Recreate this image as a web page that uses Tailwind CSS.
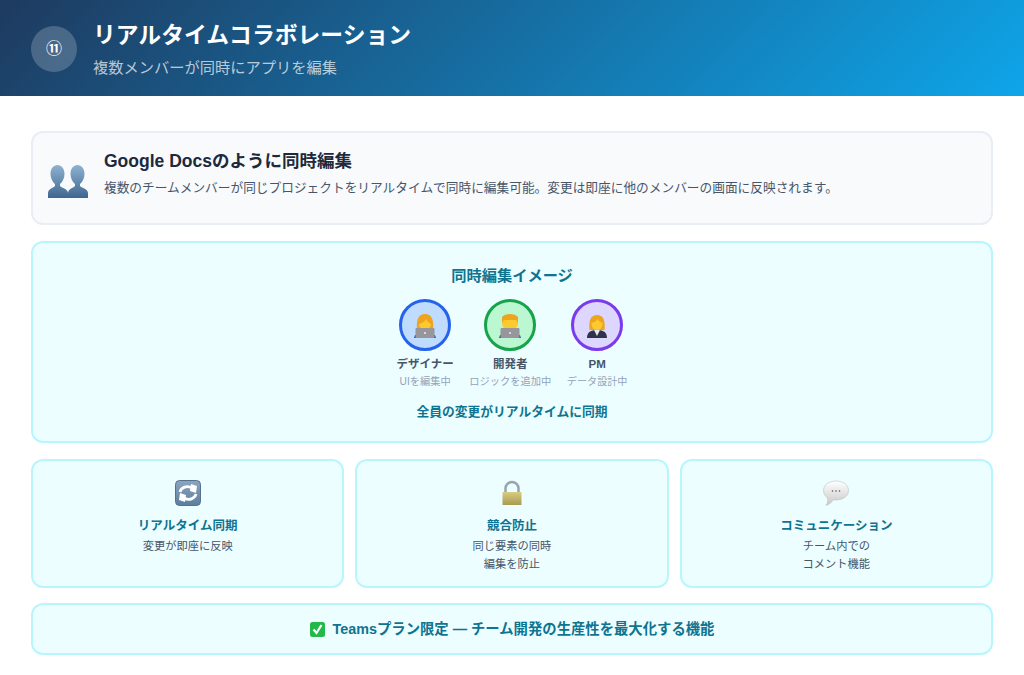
<!DOCTYPE html>
<html lang="ja">
<head>
    <meta charset="UTF-8">
    <title>リアルタイムコラボレーション</title>
    <script src="https://cdn.jsdelivr.net/npm/@tailwindcss/browser@4"></script>
</head>
<body class="bg-white font-['Liberation_Sans','Noto_Sans_CJK_JP',sans-serif] h-[675px] overflow-hidden">
    <!-- Header -->
    <header class="h-24 bg-linear-[135deg] from-[#1e3a5f] to-[#0ea5e9] flex items-center pl-[31px] gap-[16px]">
        <div class="w-[46px] h-[46px] mt-[2px] rounded-full bg-white/20 flex items-center justify-center text-white text-[16px] font-bold">⑪</div>
        <div class="mt-[2px]">
            <h1 class="text-[22.800px] leading-[30px] font-bold text-white">リアルタイムコラボレーション</h1>
            <p class="text-[15.250px] leading-[22px] mt-[7px] text-white/70">複数メンバーが同時にアプリを編集</p>
        </div>
    </header>

    <main class="px-[31px] pt-[35px] flex flex-col gap-4">
        <!-- Intro card -->
        <section class="h-[94px] bg-[#f8fafc] border-2 border-[#e9eef4] rounded-xl flex items-center pl-[15px] gap-[16px]">
            <svg class="w-10 h-[33px] mt-[7px] shrink-0" viewBox="0 0 40 33">
                <defs>
                    <linearGradient id="bust" x1="0" y1="0" x2="0" y2="1">
                        <stop offset="0" stop-color="#8fb2d0"/>
                        <stop offset="1" stop-color="#3f6690"/>
                    </linearGradient>
                </defs>
                <path fill="url(#bust)" d="M0 33V28C0 24 5 23 7 21V19C4.500 17 2.500 13 2.500 9C2.500 3.500 5.500 0 9.500 0S16.500 3.500 16.500 9C16.500 13 14.500 17 12 19V21C14 23 20 24 20 28V33Z"/>
                <path fill="url(#bust)" d="M20 33V28C20 24 25 23 27 21V19C24.500 17 22.500 13 22.500 9C22.500 3.500 25.500 0 29.500 0S36.500 3.500 36.500 9C36.500 13 34.500 17 32 19V21C34 23 40 24 40 28V33Z"/>
            </svg>
            <div class="-mt-[9px]">
                <h2 class="text-[17.500px] leading-6 font-bold text-[#1e293b]">Google Docsのように同時編集</h2>
                <p class="text-[12.700px] leading-5 mt-[5px] text-[#475569]">複数のチームメンバーが同じプロジェクトをリアルタイムで同時に編集可能。変更は即座に他のメンバーの画面に反映されます。</p>
            </div>
        </section>

        <!-- Simultaneous editing image -->
        <section class="h-[202px] bg-[#ecfeff] border-2 border-[#b8f6fd] rounded-xl flex flex-col items-center pt-[22px]">
            <h3 class="text-[15.250px] leading-[22px] font-bold text-[#0e7490]">同時編集イメージ</h3>
            <div class="flex gap-[15.500px] mt-[12px]">
                <div class="flex flex-col items-center">
                    <div class="w-[52px] h-[52px] rounded-full border-[3px] border-[#2563eb] bg-[#bfdbfe] flex items-center justify-center">
                        <svg class="w-[22px] h-[26px]" viewBox="0 0 22 26">
                            <path fill="#eda51e" d="M3 17C2 7 5 2 11 2s9 5 8 15z"/>
                            <ellipse cx="11" cy="12" rx="6" ry="6" fill="#fcc92e"/>
                            <path fill="#eda51e" d="M5 12c4-1 6-3 7-5 1 2 3 4 5 5V5H5z"/>
                            <path fill="#3b4cc0" d="M0 26l1-3h20l1 3z"/>
                            <rect x="1.500" y="16" width="19" height="10" rx="1" fill="#96969b"/>
                            <circle cx="11" cy="21" r="1" fill="#eee"/>
                        </svg>
                    </div>
                    <p class="text-[11.500px] leading-4 font-bold text-[#475569] mt-[5px]">デザイナー</p>
                    <p class="text-[10.250px] leading-4 text-[#94a3b8] mt-[2px]">UIを編集中</p>
                </div>
                <div class="flex flex-col items-center">
                    <div class="w-[52px] h-[52px] rounded-full border-[3px] border-[#16a34a] bg-[#bbf7d0] flex items-center justify-center">
                        <svg class="w-[22px] h-[26px]" viewBox="0 0 22 26">
                            <ellipse cx="11" cy="11" rx="8" ry="8" fill="#fcc92e"/>
                            <path fill="#eda51e" d="M3 11V5c3-4 13-4 16 0v6c-1-1-1-2-2-3H5c-1 1-1 2-2 3z"/>
                            <path fill="#3b4cc0" d="M0 26l1-3h20l1 3z"/>
                            <rect x="1.500" y="16" width="19" height="10" rx="1" fill="#96969b"/>
                            <circle cx="11" cy="21" r="1" fill="#eee"/>
                        </svg>
                    </div>
                    <p class="text-[11.500px] leading-4 font-bold text-[#475569] mt-[5px]">開発者</p>
                    <p class="text-[10.250px] leading-4 text-[#94a3b8] mt-[2px]">ロジックを追加中</p>
                </div>
                <div class="flex flex-col items-center">
                    <div class="w-[52px] h-[52px] rounded-full border-[3px] border-[#7c3aed] bg-[#ddd6fe] flex items-center justify-center">
                        <svg class="w-[22px] h-[26px]" viewBox="0 0 22 26">
                            <path fill="#eda51e" d="M3.500 18C2.500 8 5 3 11 3s8.500 5 7.500 15z"/>
                            <ellipse cx="11" cy="12" rx="5.500" ry="6" fill="#fcc92e"/>
                            <path fill="#eda51e" d="M5.500 11c3-1 5-2 6-4 1 2 3 3 5 4V5h-11z"/>
                            <path fill="#2f3347" d="M1 26c0-6 4-8 10-8s10 2 10 8z"/>
                            <path fill="#e9e9ee" d="M8 18h6l-3 6z"/>
                        </svg>
                    </div>
                    <p class="text-[11.500px] leading-4 font-bold text-[#475569] mt-[5px]">PM</p>
                    <p class="text-[10.100px] leading-4 text-[#94a3b8] mt-[2px]">データ設計中</p>
                </div>
            </div>
            <p class="text-[12.750px] leading-5 font-bold text-[#0e7490] mt-[12px]">全員の変更がリアルタイムに同期</p>
        </section>

        <!-- Feature cards -->
        <section class="grid grid-cols-3 gap-[11px] h-[129px]">
            <div class="bg-[#ecfeff] border-2 border-[#b8f6fd] rounded-xl flex flex-col items-center pt-[19px]">
                <svg class="w-[26px] h-[26px]" viewBox="0 0 26 26">
                    <defs>
                        <linearGradient id="tile" x1="0" y1="0" x2="0" y2="1">
                            <stop offset="0" stop-color="#8ba6c1"/>
                            <stop offset="1" stop-color="#5c7d9f"/>
                        </linearGradient>
                    </defs>
                    <rect x="0.500" y="0.500" width="25" height="25" rx="4" fill="url(#tile)" stroke="#56718c"/>
                    <path fill="none" stroke="#fff" stroke-width="2.800" d="M5 12C6 7.500 12 5 17 8"/>
                    <path fill="#fff" d="M16 4l6 2-1 7-6-2z"/>
                    <path fill="none" stroke="#fff" stroke-width="2.800" d="M21 14C20 18.500 14 21 9 18"/>
                    <path fill="#fff" d="M10 22l-6-2 1-7 6 2z"/>
                </svg>
                <h4 class="text-[12.500px] leading-5 font-bold text-[#0e7490] mt-[10px]">リアルタイム同期</h4>
                <p class="text-[11.250px] leading-[18px] text-[#475569] mt-[1px] text-center">変更が即座に反映</p>
            </div>
            <div class="bg-[#ecfeff] border-2 border-[#b8f6fd] rounded-xl flex flex-col items-center pt-[19px]">
                <svg class="w-[26px] h-[26px]" viewBox="0 0 26 26">
                    <defs>
                        <linearGradient id="lock" x1="0" y1="0" x2="0" y2="1">
                            <stop offset="0" stop-color="#d9cd82"/>
                            <stop offset="1" stop-color="#a89a50"/>
                        </linearGradient>
                    </defs>
                    <path fill="none" stroke="#98a4b0" stroke-width="2.500" d="M6.500 13V8.500a6.500 6.500 0 0 1 13 0V13"/>
                    <rect x="3.500" y="12" width="19" height="13" rx="0.500" fill="url(#lock)"/>
                </svg>
                <h4 class="text-[12.500px] leading-5 font-bold text-[#0e7490] mt-[10px]">競合防止</h4>
                <p class="text-[11.250px] leading-[18px] text-[#475569] mt-[1px] text-center">同じ要素の同時<br>編集を防止</p>
            </div>
            <div class="bg-[#ecfeff] border-2 border-[#b8f6fd] rounded-xl flex flex-col items-center pt-[19px]">
                <svg class="w-[26px] h-[26px]" viewBox="0 0 26 26">
                    <defs>
                        <linearGradient id="bubble" x1="0" y1="0" x2="0" y2="1">
                            <stop offset="0" stop-color="#ffffff"/>
                            <stop offset="1" stop-color="#c8c8c8"/>
                        </linearGradient>
                    </defs>
                    <path fill="url(#bubble)" stroke="#b5b5b5" stroke-width="0.500" d="M13 1c7 0 12.500 4 12.500 9.500S20 20 13 20c-1 0-2 0-3-.300C9 22.500 6 24.500 3 25.500c1.500-2 2-4.500 1.500-7.500C2 16 .5 13.500.5 10.500.5 5 6 1 13 1z"/>
                    <circle cx="9.500" cy="11" r="0.800" fill="#555"/>
                    <circle cx="13" cy="11" r="0.800" fill="#555"/>
                    <circle cx="16.500" cy="11" r="0.800" fill="#555"/>
                </svg>
                <h4 class="text-[12.500px] leading-5 font-bold text-[#0e7490] mt-[10px]">コミュニケーション</h4>
                <p class="text-[11.250px] leading-[18px] text-[#475569] mt-[1px] text-center">チーム内での<br>コメント機能</p>
            </div>
        </section>

        <!-- Footer note -->
        <section class="h-[52px] -mt-[1px] bg-[#ecfeff] border-2 border-[#b8f6fd] rounded-xl flex items-center justify-center gap-[8px]">
            <svg class="w-[15px] h-[15px]" viewBox="0 0 15 15">
                <rect width="15" height="15" rx="2.500" fill="#22b84a"/>
                <path fill="none" stroke="#fff" stroke-width="2.200" d="M3.500 7.500l3 3.500 5-8"/>
            </svg>
            <p class="text-[14.350px] leading-5 font-bold text-[#0e7490]">Teamsプラン限定 — チーム開発の生産性を最大化する機能</p>
        </section>
    </main>
</body>
</html>
